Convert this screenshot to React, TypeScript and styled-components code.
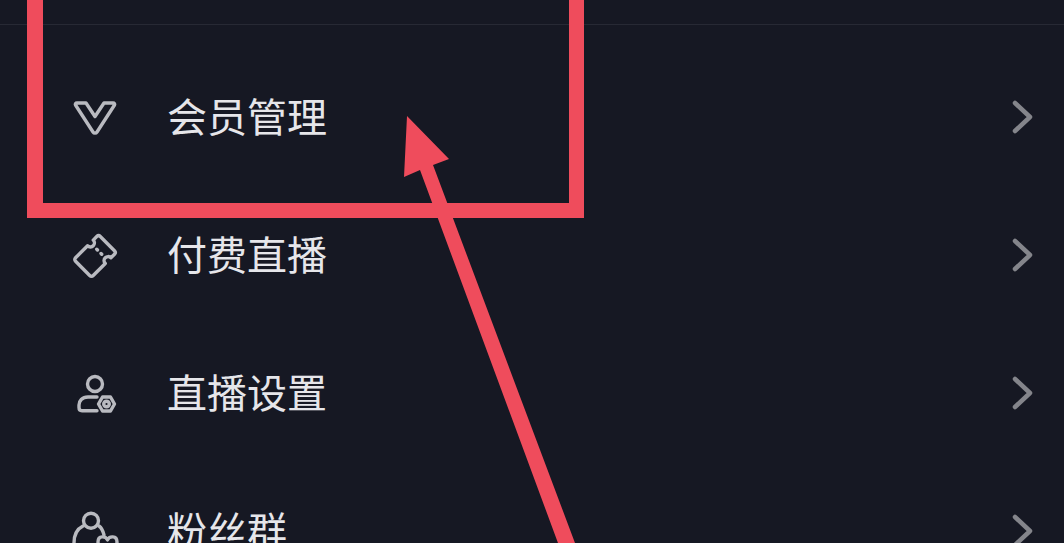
import React from "react";
import styled, { createGlobalStyle } from "styled-components";

const Global = createGlobalStyle`
  html, body { margin: 0; padding: 0; width: 1064px; height: 543px; overflow: hidden; background: #161823; }
  #root { width: 1064px; height: 543px; }
`;

const Screen = styled.div`
  position: relative;
  width: 1064px;
  height: 543px;
  overflow: hidden;
  background: #161823;
  font-family: "Noto Sans CJK SC", "Noto Sans", sans-serif;
`;

const TopBar = styled.div`
  height: 24px;
  border-bottom: 1px solid #272934;
`;

const List = styled.ul`
  list-style: none;
  margin: 0;
  padding: 23px 0 0;
`;

const Row = styled.li`
  display: flex;
  align-items: center;
  height: 138px;
  padding: 0 30px 0 71px;
`;

const IconBox = styled.svg`
  width: 48px;
  height: 48px;
  flex: none;
  fill: none;
  stroke: #b9bac0;
  stroke-width: 3.4;
  stroke-linecap: round;
  stroke-linejoin: round;
`;

const Label = styled.span`
  margin: 0 0 4px 48px;
  font-size: 40px;
  line-height: 48px;
  color: #e6e6ea;
`;

const Chevron = styled.svg`
  margin-left: auto;
  width: 24px;
  height: 36px;
  flex: none;
  fill: none;
  stroke: #84858b;
  stroke-width: 4.5;
  stroke-linecap: round;
  stroke-linejoin: round;
`;

const Highlight = styled.div`
  position: absolute;
  left: 27px;
  top: -20px;
  width: 526px;
  height: 208px;
  border: solid #ef4c5c;
  border-width: 15px 15px 15px 16px;
`;

const Arrow = styled.svg`
  position: absolute;
  left: 0;
  top: 0;
  width: 1064px;
  height: 543px;
  fill: #ef4c5c;
`;

const VipIcon = () => (
  <IconBox viewBox="0 0 48 48">
    <path d="M6 10H15L24 23.5L33 10H42C43.5 10 44 11 43.5 12L26 39C25 40.5 23 40.5 22 39L4.5 12C4 11 4.5 10 6 10Z" />
  </IconBox>
);

const TicketIcon = () => (
  <IconBox viewBox="0 0 48 48">
    <g transform="rotate(-45 24 25)">
      <path d="M9 12.5H26C26 15 28 16.5 30 16.5C32 16.5 34 15 34 12.5H39C40.5 12.5 41.5 13.5 41.5 15V35C41.5 36.5 40.5 37.5 39 37.5H34C34 35 32 33.5 30 33.5C28 33.5 26 35 26 37.5H9C7.5 37.5 6.5 36.5 6.5 35V15C6.5 13.5 7.5 12.5 9 12.5Z" />
      <path d="M30 21.5V22.5M30 27.5V28.5" />
    </g>
  </IconBox>
);

const HostSettingsIcon = () => (
  <IconBox viewBox="0 0 48 48">
    <circle cx="24" cy="15" r="7.5" />
    <path d="M26 28H17C11 28 8 32 8 36V38.5C8 40.5 9 41.7 11 41.7H26" />
    <path d="M43.5 35L39.5 28H31.5L27.5 35L31.5 42H39.5Z" />
    <circle cx="35.5" cy="35" r="2.8" />
  </IconBox>
);

const FansIcon = () => (
  <IconBox viewBox="0 0 48 48">
    <circle cx="20" cy="13.7" r="7.5" />
    <path d="M12 19C6 22 3 28 3 36V42" />
    <path d="M28 19C31 21 32 24 33 28" />
    <path d="M36.5 33C35 29 27 28 27 35C27 41 33 45 36.5 48C40 45 46 41 46 35C46 28 38 29 36.5 33Z" />
  </IconBox>
);

const rows = [
  { label: "会员管理", icon: <VipIcon /> },
  { label: "付费直播", icon: <TicketIcon /> },
  { label: "直播设置", icon: <HostSettingsIcon /> },
  { label: "粉丝群", icon: <FansIcon /> },
];

export default function App() {
  return (
    <Screen>
      <Global />
      <TopBar />
      <List>
        {rows.map((r) => (
          <Row key={r.label}>
            {r.icon}
            <Label>{r.label}</Label>
            <Chevron viewBox="0 0 24 36">
              <path d="M5 4L20 18L5 32" />
            </Chevron>
          </Row>
        ))}
      </List>
      <Highlight />
      <Arrow viewBox="0 0 1064 543">
        <polygon points="407,116 449,159 433,165 575,543 558,543 420,170 404,177" />
      </Arrow>
    </Screen>
  );
}
